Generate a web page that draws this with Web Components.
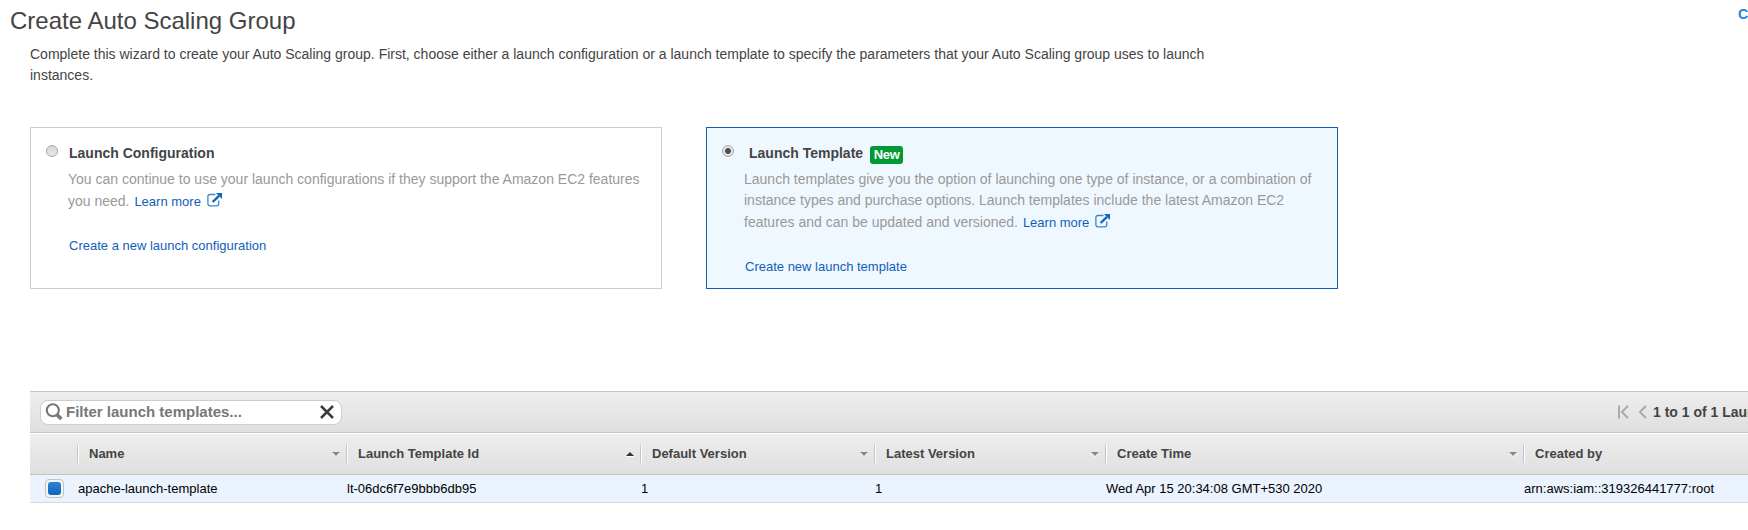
<!DOCTYPE html>
<html lang="en">
<head>
<meta charset="utf-8">
<title>Create Auto Scaling Group</title>
<style>
html,body{margin:0;height:530px;overflow:hidden;background:#fff}
body{font-family:"Liberation Sans",Arial,sans-serif;font-size:14px;color:#444}
</style>
</head>
<body>
<asg-page></asg-page>
<script>
const define = (name, html) => {
  const t = document.createElement('template');
  t.innerHTML = html;
  customElements.define(name, class extends HTMLElement {
    constructor() {
      super();
      this.attachShadow({ mode: 'open' }).append(t.content.cloneNode(true));
    }
  });
};

define('external-icon', `<style>
:host{display:inline-block;width:15px;height:14px;vertical-align:-1px;margin-left:6px}
svg{display:block}</style>
<svg width="15" height="14" viewBox="0 0 15 14" fill="none" stroke="#1166bb">
<path d="M8.5 1.5H3Q.9 1.5.9 3.5V10.5Q.9 12.9 3 12.9H9.5Q11.8 12.9 11.8 10.5V7.5" stroke-width="1.3" opacity=".8"/>
<path d="M5.6 9 12 2.8" stroke-width="2.4"/><path d="M9 0H15V6Z" fill="#1166bb" stroke="none"/></svg>`);

define('radio-dot', `<style>
:host{display:block;box-sizing:border-box;width:12px;height:12px;border:1px solid #a9a9a9;border-radius:50%;background:linear-gradient(#d9d9d9,#e6e6e6)}
:host([checked]){background:radial-gradient(circle,#505050 0 2.6px,#e6e6e6 3.3px)}</style>`);

define('new-badge', `<style>
:host{display:block;box-sizing:border-box;width:33px;height:18px;border-radius:3px;background:#093;color:#fff;font:bold 13px/18px "Liberation Sans",Arial,sans-serif;text-align:center;letter-spacing:-.3px}</style><slot></slot>`);

define('a-link', `<style>
:host{display:inline;color:#1160b7;font-size:13px;cursor:pointer}</style><slot></slot>`);

define('option-card', `<style>
:host{display:block;box-sizing:border-box;width:632px;height:162px;border:1px solid #ccc;background:#fff;padding:12px 0 0 15px}
:host([selected]){border-color:#1160b7;background:#f0f8ff}
.head{display:flex;height:29px}
radio-dot{margin-top:5px}
.title{font-weight:bold;line-height:26px;margin-left:11px;white-space:nowrap;display:flex}
:host([selected]) .title{margin-left:15px}
::slotted(new-badge){margin:6px 0 0 7px}
.desc{color:#999;line-height:21.5px;margin:0 0 0 22px;white-space:nowrap}
:host([selected]) .desc{line-height:21.4px}
.desc ::slotted(a-link){margin-left:1px}
.act{margin:22px 0 0 23px;line-height:22px}
</style>
<div class="head"><radio-dot></radio-dot><div class="title"><slot name="title"></slot><slot name="badge"></slot></div></div>
<div class="desc"><slot></slot></div><div class="act"><slot name="action"></slot></div>`);

define('search-box', `<style>
:host{display:flex;box-sizing:border-box;width:302px;height:25px;border:1px solid #ccc;border-radius:8px;background:#fff;align-items:center;padding:0 7px 0 4px}
span{flex:1;font-weight:bold;font-size:15px;line-height:21px;padding-bottom:2px;color:#777;margin-left:3px;white-space:nowrap}
svg{display:block}</style>
<svg width="18" height="18" viewBox="0 0 18 18" fill="none" stroke="#777"><circle cx="7.8" cy="7.3" r="6" stroke-width="2.1"/><path d="M12 11.7 16.3 16" stroke-width="3.6"/></svg>
<span><slot></slot></span>
<svg width="14" height="14" viewBox="0 0 14 14" stroke="#3c3c3c" stroke-width="2.5"><path d="M1 1 13 13M13 1 1 13"/></svg>`);

define('page-nav', `<style>
:host{display:flex;width:130px;align-items:center;font-weight:bold;white-space:nowrap;color:#444}
svg{display:block;margin-right:6px;flex:none}</style>
<svg width="29" height="14" viewBox="0 0 29 14" fill="none" stroke="#aaa" stroke-width="2"><path d="M1 .5V13.5M10 .8 4 7 10 13.2M28 .8 22 7 28 13.2"/></svg><slot></slot>`);

define('col-head', `<style>
:host{display:flex;box-sizing:border-box;height:18px;border-left:1px solid #c4c4c4;box-shadow:inset 1px 0 #fff;padding:0 6px 0 11px;align-items:center;justify-content:space-between;font:bold 13px/18px "Liberation Sans",Arial,sans-serif;color:#444;white-space:nowrap}
i{display:block;border:4px solid transparent;border-top-color:#888;border-bottom:0;filter:drop-shadow(0 1px #fff)}
:host([sort=asc]) i{border-top:0;border-bottom:4px solid #333}
:host([sort=none]) i{display:none}</style><slot></slot><i></i>`);

define('check-tile', `<style>
:host{display:block;box-sizing:border-box;width:19px;height:19px;border:1px solid #c2c2c2;border-radius:4px;background:#f4f4f4;padding:2px}
div{height:13px;border-radius:3px;background:linear-gradient(#2b83d8,#1264ba)}</style><div></div>`);

define('template-table', `<style>
:host{display:block;border-top:1px solid #c4c4c4}
.bar{display:flex;height:40px;background:linear-gradient(#eee,#dfdfdf);border-bottom:1px solid #c4c4c4;padding-left:10px;align-items:center;justify-content:space-between}
.grid{display:grid;grid-template-columns:47px 269px 294px 234px 231px 418px 225px;align-items:center}
.th{height:40px;margin-top:1px;background:linear-gradient(#eee,#dfdfdf);border-bottom:1px solid #c4c4c4}
.tr{height:27px;background:#eaf3fe;border-bottom:1px solid #d8d8d8;font-size:13px;color:#000;white-space:nowrap}
.tr span{padding-left:1px}
check-tile{margin-left:15px}
</style>
<div class="bar"><search-box>Filter launch templates...</search-box><page-nav>1 to 1 of 1 Launch Templates</page-nav></div>
<div class="grid th"><b></b><col-head>Name</col-head><col-head sort="asc">Launch Template Id</col-head><col-head>Default Version</col-head><col-head>Latest Version</col-head><col-head>Create Time</col-head><col-head sort="none">Created by</col-head></div>
<div class="grid tr"><check-tile></check-tile><span>apache-launch-template</span><span>lt-06dc6f7e9bbb6db95</span><span>1</span><span>1</span><span>Wed Apr 15 20:34:08 GMT+530 2020</span><span>arn:aws:iam::319326441777:root</span></div>`);

define('asg-page', `<style>
:host{display:block;height:530px;overflow:hidden}
header{display:flex;justify-content:space-between;height:42px;padding-left:10px}
h1{margin:0;font-weight:normal;font-size:24px;line-height:42px}
header b{width:10px;line-height:28px;color:#2a7de1}
p{margin:2px 0 0 30px;height:83px;line-height:21px;white-space:nowrap}
.cards{display:flex;gap:44px;margin-left:30px}
template-table{margin:102px 0 0 30px}
</style>
<header><h1>Create Auto Scaling Group</h1><b>C</b></header>
<p>Complete this wizard to create your Auto Scaling group. First, choose either a launch configuration or a launch template to specify the parameters that your Auto Scaling group uses to launch<br>instances.</p>
<div class="cards">
<option-card><span slot="title">Launch Configuration</span>You can continue to use your launch configurations if they support the Amazon EC2 features<br>you need. <a-link>Learn more</a-link><external-icon></external-icon><a-link slot="action">Create a new launch configuration</a-link></option-card>
<option-card selected><span slot="title">Launch Template</span><new-badge slot="badge">New</new-badge>Launch templates give you the option of launching one type of instance, or a combination of<br>instance types and purchase options. Launch templates include the latest Amazon EC2<br>features and can be updated and versioned. <a-link>Learn more</a-link><external-icon></external-icon><a-link slot="action">Create new launch template</a-link></option-card>
</div>
<template-table></template-table>`);

for (const c of document.querySelector('asg-page').shadowRoot.querySelectorAll('option-card'))
  c.shadowRoot.querySelector('radio-dot').toggleAttribute('checked', c.hasAttribute('selected'));
</script>
</body>
</html>
